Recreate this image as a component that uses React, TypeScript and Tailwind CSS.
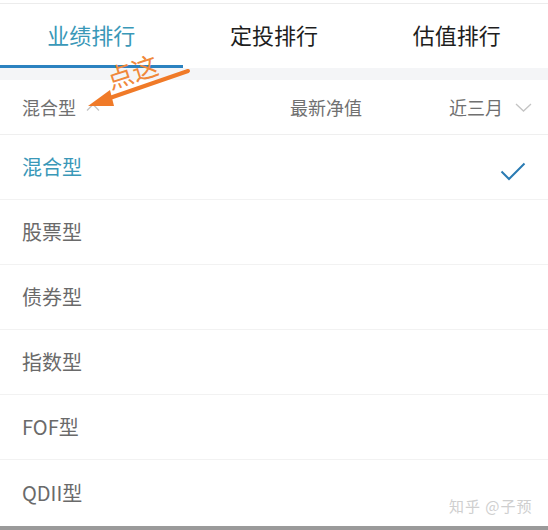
const font = { fontFamily: '"Noto Sans CJK SC", "Noto Sans", sans-serif' };

const tabs = ["业绩排行", "定投排行", "估值排行"];
const types = ["混合型", "股票型", "债券型", "指数型", "FOF型", "QDII型"];

const App = () => {
  return (
    <div className="relative w-[548px] h-[530px] bg-white overflow-hidden" style={font}>
      {/* Tabs */}
      <div className="pt-[3px]">
        <div className="h-[65px] border-t border-[#ececec] grid grid-cols-3">
          {tabs.map((t, i) => (
            <div key={t} className="relative flex items-center justify-center pb-[4px]">
              <span className={`text-[22px] ${i === 0 ? "text-[#3a98b8]" : "text-[#1e1e1e]"}`}>{t}</span>
              {i === 0 && <div className="absolute left-0 right-0 bottom-0 h-[3px] bg-[#2b82c0]" />}
            </div>
          ))}
        </div>
      </div>
      <div className="h-[12px] bg-[#f4f5f7]" />

      {/* Header */}
      <div className="h-[55px] flex items-center pl-[22px] pr-[16px] border-b border-[#efefef] text-[18px] text-[#707070]">
        <div className="flex items-center gap-[10px] flex-1">
          <span>混合型</span>
          <svg width="14" height="8" viewBox="0 0 14 8" fill="none" stroke="#c4c4c4" strokeWidth="1.3">
            <path d="M1 7.5L7 1.5L13 7.5" />
          </svg>
        </div>
        <span className="w-[159px]">最新净值</span>
        <div className="flex items-center gap-[12px]">
          <span>近三月</span>
          <svg width="17" height="9" viewBox="0 0 17 9" fill="none" stroke="#c4c4c4" strokeWidth="1.3">
            <path d="M1 1L8.5 8L16 1" />
          </svg>
        </div>
      </div>

      {/* Options */}
      <div className="flex flex-col">
        {types.map((t, i) => (
          <div
            key={t}
            className="h-[65px] flex items-center justify-between pl-[22px] pr-[22px] border-b border-[#f2f2f2] last:border-b-0"
          >
            <span className={`text-[20px] ${i === 0 ? "text-[#3a98b8]" : "text-[#6a6a6a]"}`}>{t}</span>
            {i === 0 && (
              <svg className="mt-[10px]" width="26" height="20" viewBox="0 0 26 20" fill="none" stroke="#2a7bb3" strokeWidth="2">
                <path d="M1.5 9.5L9 17L24.5 1.5" />
              </svg>
            )}
          </div>
        ))}
      </div>

      <div className="absolute left-0 right-0 bottom-0 h-[4px] bg-[#9a9a9a]" />

      {/* Watermark */}
      <div className="absolute left-[449px] top-[495px] text-[15px] text-[#cfcfcf] tracking-[1px]">知乎 @子预</div>

      {/* Annotation */}
      <div className="absolute left-[106px] top-[58px] text-[26px] text-[#f0883a] -rotate-[18deg] leading-none">点这</div>
      <svg className="absolute left-0 top-0" width="548" height="530" viewBox="0 0 548 530" fill="none">
        <path d="M188 71L104 100" stroke="#f07a28" strokeWidth="4" strokeLinecap="round" />
        <path d="M88 106L110 90L114 106Z" fill="#f07a28" />
      </svg>
    </div>
  );
};

export default App;
